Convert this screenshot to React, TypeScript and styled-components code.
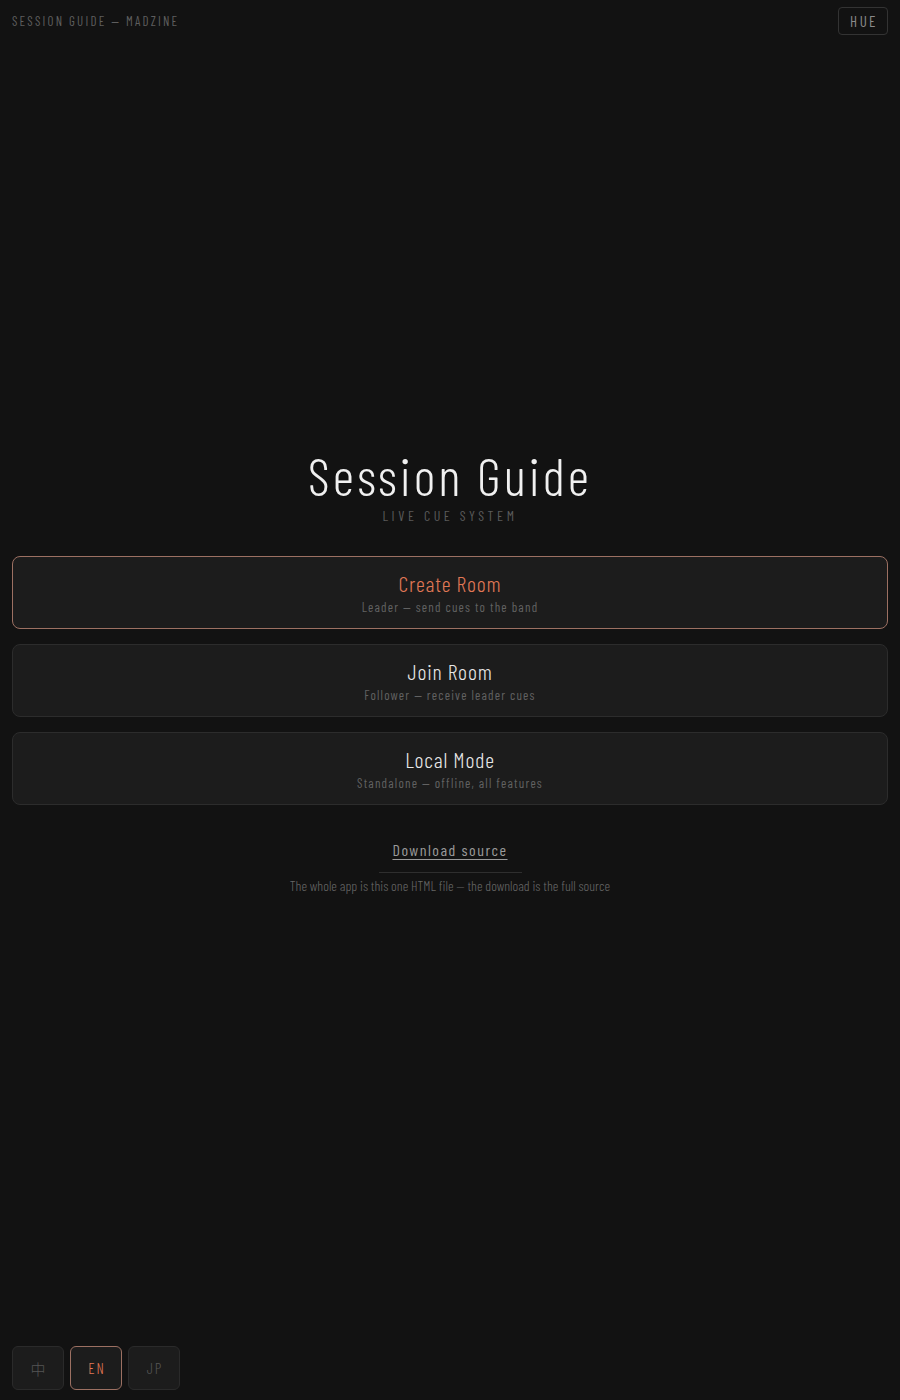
import * as React from 'react';
import styled, { createGlobalStyle, css } from 'styled-components';

const ACCENT = '#e07856';
const FONT = `"Barlow Condensed", "Liberation Sans Narrow", "DejaVu Sans Condensed", "DejaVu Sans", sans-serif`;

const GlobalStyle = createGlobalStyle`
  html, body {
    margin: 0;
    padding: 0;
    background: #121212;
  }
  body {
    font-family: ${FONT};
    color: #e8e8e8;
  }
  * {
    box-sizing: border-box;
  }
`;

const Page = styled.div`
  min-height: 1400px;
  display: flex;
  flex-direction: column;
  padding: 0 12px;
`;

const TopBar = styled.header`
  display: flex;
  align-items: center;
  justify-content: space-between;
  height: 42px;
`;

const Brand = styled.div`
  font-size: 13px;
  font-weight: 400;
  letter-spacing: 2.2px;
  color: #5e5e5e;
  text-transform: uppercase;
`;

const HueButton = styled.button`
  font-family: ${FONT};
  font-weight: 400;
  background: transparent;
  border: 1px solid #333;
  border-radius: 4px;
  color: #8a8a8a;
  font-size: 15px;
  letter-spacing: 2.5px;
  height: 28px;
  padding: 0 9px 0 11px;
  cursor: pointer;
`;

const Main = styled.main`
  flex: 1;
  display: flex;
  flex-direction: column;
  justify-content: center;
  padding-bottom: 46px;
`;

const Title = styled.h1`
  margin: 0;
  text-align: center;
  font-weight: 300;
  font-size: 53px;
  letter-spacing: 3px;
  color: #f0f0f0;
  line-height: 1;
`;

const Tagline = styled.div`
  text-align: center;
  font-size: 14px;
  font-weight: 400;
  letter-spacing: 3.6px;
  color: #5a5a5a;
  margin-top: 5px;
  margin-bottom: 32px;
`;

const Options = styled.div`
  display: flex;
  flex-direction: column;
  gap: 15px;
`;

const OptionCard = styled.button<{ $active?: boolean }>`
  font-family: ${FONT};
  height: 73px;
  width: 100%;
  background: #1c1c1c;
  border: 1px solid #2c2c2c;
  border-radius: 8px;
  display: flex;
  flex-direction: column;
  align-items: center;
  justify-content: center;
  gap: 3px;
  cursor: pointer;

  ${(p) =>
    p.$active &&
    css`
      border-color: #9c7062;
    `}
`;

const OptionTitle = styled.span<{ $active?: boolean }>`
  font-size: 22px;
  font-weight: 300;
  letter-spacing: 0.8px;
  color: ${(p) => (p.$active ? ACCENT : '#e6e6e6')};
`;

const OptionDesc = styled.span`
  font-size: 13px;
  font-weight: 400;
  letter-spacing: 1.2px;
  color: #626262;
`;

const SourceBlock = styled.div`
  display: flex;
  flex-direction: column;
  align-items: center;
  margin-top: 35px;
`;

const SourceLink = styled.a`
  font-size: 16px;
  font-weight: 400;
  letter-spacing: 1.5px;
  color: #9a9a9a;
  text-decoration: underline;
  text-underline-offset: 3px;
  padding-bottom: 13px;
  border-bottom: 1px solid #2e2e2e;
  width: 143px;
  text-align: center;
  white-space: nowrap;
`;

const SourceNote = styled.div`
  font-size: 14px;
  font-weight: 300;
  color: #666;
  margin-top: 4px;
`;

const LangBar = styled.footer`
  display: flex;
  gap: 6px;
  padding-bottom: 10px;
`;

const LangButton = styled.button<{ $active?: boolean }>`
  font-family: ${FONT}, "Noto Sans CJK SC";
  font-weight: 300;
  width: 52px;
  height: 44px;
  border-radius: 6px;
  background: #1c1c1c;
  border: 1px solid ${(p) => (p.$active ? '#9c7062' : '#2a2a2a')};
  color: ${(p) => (p.$active ? ACCENT : '#555')};
  font-size: 15px;
  letter-spacing: 2px;
  padding: 0 0 0 2px;
  cursor: pointer;
`;

const options = [
  { title: 'Create Room', desc: 'Leader — send cues to the band', active: true },
  { title: 'Join Room', desc: 'Follower — receive leader cues' },
  { title: 'Local Mode', desc: 'Standalone — offline, all features' },
];

export default function App() {
  return (
    <>
      <GlobalStyle />
      <Page>
        <TopBar>
          <Brand>Session Guide — Madzine</Brand>
          <HueButton type="button">HUE</HueButton>
        </TopBar>
        <Main>
          <Title>Session Guide</Title>
          <Tagline>LIVE CUE SYSTEM</Tagline>
          <Options>
            {options.map((o) => (
              <OptionCard key={o.title} $active={o.active} type="button">
                <OptionTitle $active={o.active}>{o.title}</OptionTitle>
                <OptionDesc>{o.desc}</OptionDesc>
              </OptionCard>
            ))}
          </Options>
          <SourceBlock>
            <SourceLink href="#">Download source</SourceLink>
            <SourceNote>The whole app is this one HTML file — the download is the full source</SourceNote>
          </SourceBlock>
        </Main>
        <LangBar>
          <LangButton type="button">中</LangButton>
          <LangButton type="button" $active>EN</LangButton>
          <LangButton type="button">JP</LangButton>
        </LangBar>
      </Page>
    </>
  );
}
